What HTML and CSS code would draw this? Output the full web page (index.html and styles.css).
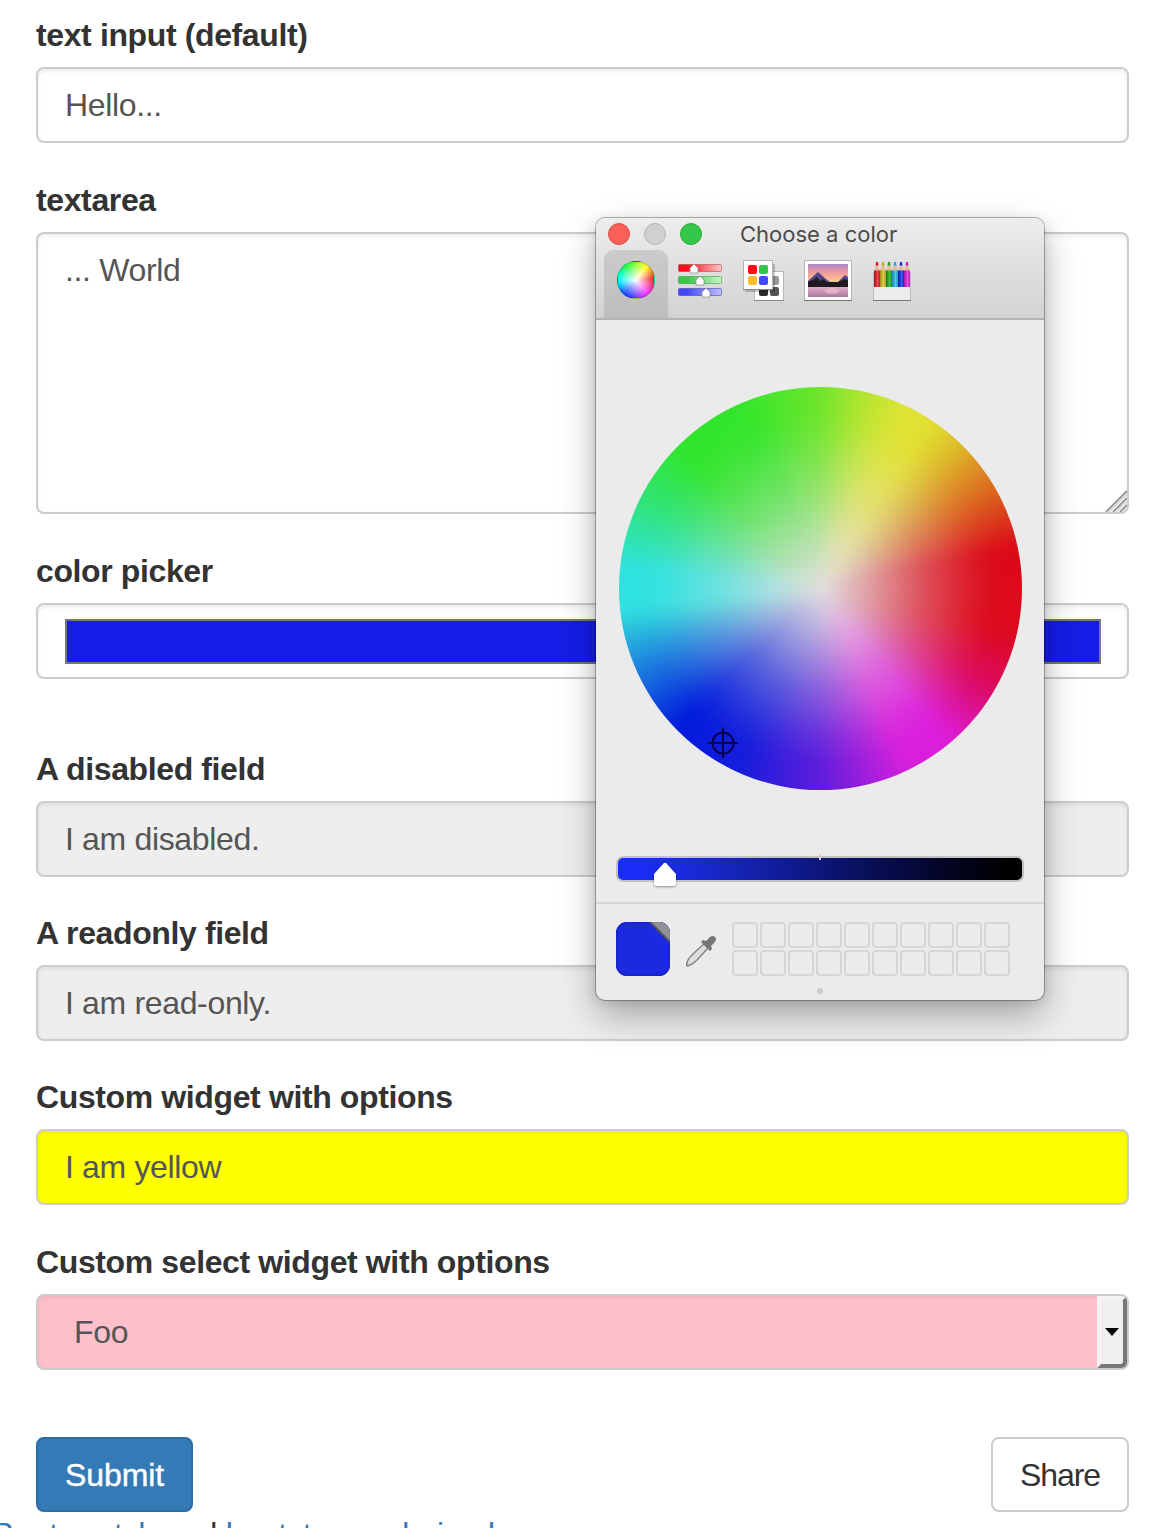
FILE: index.html
```
<!DOCTYPE html>
<html lang="en">
<head>
<meta charset="utf-8">
<title>Form widgets</title>
<link rel="stylesheet" href="styles.css">
</head>
<body>
<form class="form">
  <div class="group group-first"><div class="label">text input (default)</div><div class="control">Hello...</div></div>
  <div class="group"><div class="label">textarea</div>
    <div class="control control-area">... World
      <svg class="grip" width="22" height="22" viewBox="0 0 22 22"><path d="M1 22 22 1M8 22 22 8M15 22l7-7" stroke="#999" stroke-width="2"/><path d="M4 22 22 4M11 22l11-11M18 22l4-4" stroke="#ddd" stroke-width="2"/></svg>
    </div></div>
  <div class="group group-color"><div class="label">color picker</div><div class="control control-color"><div class="color-value"></div></div></div>
  <div class="group"><div class="label">A disabled field</div><div class="control control-off">I am disabled.</div></div>
  <div class="group"><div class="label">A readonly field</div><div class="control control-off">I am read-only.</div></div>
  <div class="group"><div class="label">Custom widget with options</div><div class="control control-yellow">I am yellow</div></div>
  <div class="group"><div class="label">Custom select widget with options</div>
    <div class="control control-pink"><span>Foo</span><span class="drop"><svg width="14" height="8" viewBox="0 0 14 8"><path d="M0 0h14L7 8z"/></svg></span></div></div>
  <div class="actions"><div class="btn btn-primary">Submit</div><div class="btn btn-share">Share</div></div>
</form>
<p class="footer"><a>Bootswatch</a> and <a>bootstrap a derived</a></p>

<section class="picker">
  <header class="picker-head">
    <div class="titlebar"><i class="dot red"></i><i class="dot gray"></i><i class="dot green"></i><span class="title">Choose a color</span></div>
    <nav class="tabs">
      <div class="tab tab-on"><div class="mini-wheel"></div></div>
      <div class="tab"><svg width="46" height="42" viewBox="0 0 46 42">
        <defs>
          <linearGradient id="r"><stop offset=".2" stop-color="#fc0d1b"/><stop offset="1" stop-color="#fcc8ca"/></linearGradient>
          <linearGradient id="g"><stop offset=".2" stop-color="#35c748"/><stop offset="1" stop-color="#c5f8c8"/></linearGradient>
          <linearGradient id="b"><stop offset=".2" stop-color="#424af8"/><stop offset="1" stop-color="#bcbffa"/></linearGradient>
        </defs>
        <rect x="1.5" y="4.5" width="43" height="7" rx="1" fill="url(#r)" stroke="#a33" stroke-opacity=".5"/>
        <rect x="1.5" y="16.5" width="43" height="7" rx="1" fill="url(#g)" stroke="#383" stroke-opacity=".5"/>
        <rect x="1.5" y="28.5" width="43" height="7" rx="1" fill="url(#b)" stroke="#33a" stroke-opacity=".5"/>
        <g fill="#fff" stroke="#777" stroke-width=".6"><path d="M13 13V8l4-4 4 4v5z"/><path d="M19 25v-5l4-4 4 4v5z"/><path d="M25 37v-5l4-4 4 4v5z"/></g>
      </svg></div>
      <div class="tab"><svg width="42" height="42" viewBox="0 0 42 42">
        <path d="M11.500 11.500h29v29h-29z" fill="#fff" stroke="#b5b5b5"/><path d="M11 40.500h30" stroke="#888"/>
        <rect x="27" y="16" width="9" height="9" rx="2" fill="#999b9f"/><rect x="16" y="27" width="9" height="9" rx="2" fill="#2c2c2c"/><rect x="27" y="27" width="9" height="9" rx="2" fill="#555659"/>
        <path d="M2 31h29V4" fill="none" stroke="#000" stroke-opacity=".2" stroke-width="2"/>
        <path d="M.5.5h29v29H.5z" fill="#fff" stroke="#b5b5b5"/><path d="M0 29.500h30" stroke="#888"/>
        <rect x="5" y="5" width="9" height="9" rx="2" fill="#fc0d1b"/><rect x="16" y="5" width="9" height="9" rx="2" fill="#35c748"/><rect x="5" y="16" width="9" height="9" rx="2" fill="#fdbd2d"/><rect x="16" y="16" width="9" height="9" rx="2" fill="#424af8"/>
      </svg></div>
      <div class="tab"><svg width="48" height="42" viewBox="0 0 48 42">
        <defs><linearGradient id="sky" x2="0" y2="1"><stop stop-color="#ae86c6"/><stop offset=".45" stop-color="#ef9d9c"/><stop offset="1" stop-color="#fcd68b"/></linearGradient><linearGradient id="sea" x2="0" y2="1"><stop stop-color="#e7b0cd"/><stop offset="1" stop-color="#aa7b9d"/></linearGradient></defs>
        <path d="M.5.5h47v40H.5z" fill="#fff" stroke="#b5b5b5"/><path d="M0 40.500h48" stroke="#777"/>
        <path d="M4 4h40v20H4z" fill="url(#sky)"/><path d="M4 26h40v11H4z" fill="url(#sea)"/>
        <path d="M4 21l10-9 8 7 4 3h8l7-7 3 2v8H4z" fill="#524587"/><path d="M4 22l5-2 4-3 3 4 3-2 4 3h11l6-3 4 1v7H4z" fill="#1d1b20"/><ellipse cx="28" cy="31" rx="7" ry="3" fill="#edc5d2" opacity=".6"/>
      </svg></div>
      <div class="tab"><svg width="38" height="42" viewBox="0 0 38 42">
        <defs>
          <linearGradient id="shade"><stop stop-opacity=".3"/><stop offset=".35" stop-opacity=".1"/><stop offset=".5" stop-color="#fff" stop-opacity=".2"/><stop offset="1" stop-opacity=".25"/></linearGradient>
          <g id="pencil"><path d="M0 11 2 4h2l2 7z" fill="#e0c09c"/><path d="M0 10.500h6V27H0z" fill="currentColor"/><path d="M1.500 5.500 2 2.500q1-1.500 2 0l.5 3z" fill="currentColor"/><path d="M1.500 5.500 2 2.500q1-1.500 2 0l.5 3z" opacity=".15"/><path d="M0 10.500h6V27H0z" fill="url(#shade)"/></g>
        </defs>
        <path d="M.5 12v28.500h37V12" fill="#ececec" stroke="#bbb"/><path d="M0 40.500h38" stroke="#777"/>
        <use href="#pencil" x="1" color="#ee252e"/><use href="#pencil" x="7" color="#dfc82b"/><use href="#pencil" x="13" color="#20b92d"/><use href="#pencil" x="19" color="#2fbdf9"/><use href="#pencil" x="25" color="#183af2"/><use href="#pencil" x="31" color="#e529e7"/>
      </svg></div>
    </nav>
  </header>
  <div class="wheel-area">
    <div class="wheel"><svg class="cross" width="30" height="30" viewBox="0 0 30 30"><path d="M15 0v30M0 15h30" /><circle cx="15" cy="15" r="10.500"/></svg></div>
    <div class="slider"><i class="tick"></i><svg class="thumb" width="24" height="26" viewBox="0 0 24 26"><path d="M1 12 10.500 1.500q1.500-1.500 3 0L23 12v9q0 3-3 3H4q-3 0-3-3z" fill="#fff"/></svg></div>
  </div>
  <footer class="picker-foot">
    <div class="foot-row">
      <div class="swatch"><svg width="54" height="54" viewBox="0 0 54 54"><path d="M34 0h20v20z" fill="#929292"/><path d="M34 0 54 20" stroke="#555" stroke-width="2"/></svg></div>
      <svg class="dropper" width="32" height="32" viewBox="0 0 32 32"><path d="M19 9 23 13 12 25Q7 30 2 31q-1-2 1-6Q5 21 19 9z" fill="#dedede" stroke="#858585" stroke-width="1.500"/><path d="M16 7l2-2 3 1 4-4q3-2 5 0 2 2 0 5l-4 4 1 3-2 2z" fill="#777"/></svg>
      <div class="cells"><i></i><i></i><i></i><i></i><i></i><i></i><i></i><i></i><i></i><i></i><i></i><i></i><i></i><i></i><i></i><i></i><i></i><i></i><i></i><i></i></div>
    </div>
    <div class="page-dot"></div>
  </footer>
</section>
</body>
</html>
```
FILE: styles.css
```
* { box-sizing: border-box; }
body { margin: 0; height: 1528px; overflow: hidden; position: relative; background: #fff; color: #333; font: 32px/45px "Liberation Sans", Arial, sans-serif; letter-spacing: -.34px; }
.form { padding: 11px 29px 0 36px; }
.group { margin-bottom: 32.400px; }
.group-first { margin-bottom: 33.300px; }
.group-color { margin-bottom: 66px; }
.label { height: 45px; margin-bottom: 11px; padding-top: 2px; font-weight: 700; letter-spacing: -.38px; white-space: nowrap; }
.control { height: 76px; padding: 14px 27px 0; border: 2px solid #ccc; border-radius: 8px; color: #555; background: #fff; box-shadow: inset 0 2px 4px rgba(0,0,0,.08); }
.control-area { height: 282px; position: relative; }
.grip { position: absolute; right: 0; bottom: 0; border-radius: 0 0 6px 0; }
.control-color { padding: 14px 26px 0 27px; }
.color-value { height: 45px; background: #161de6; border: 2px solid #777; }
.control-off { background: #eee; }
.control-yellow { background: #ff0; }
.control-pink { background: #ffc0cb; display: flex; justify-content: space-between; padding: 0 0 0 36px; }
.control-pink > span:first-child { padding-top: 14.500px; }
.drop { width: 30px; display: flex; align-items: center; justify-content: center; background: #efefef; border: 4px solid; border-color: #f4f4f4 #777 #777 #f4f4f4; border-radius: 0 6px 6px 0; }
.actions { display: flex; justify-content: space-between; padding-top: 35px; }
.btn { height: 75px; padding: 13.500px 27px; border: 2px solid #ccc; border-radius: 8px; }
.btn-primary { color: #fff; background: #337ab7; border-color: #2e6da4; letter-spacing: -.1px; -webkit-text-stroke: .4px #fff; }
.btn-share { letter-spacing: -1.100px; }
.footer { margin: 0 0 0 -7px; white-space: nowrap; letter-spacing: -.26px; }
.footer a { color: #337ab7; }

.picker { position: absolute; left: 596px; top: 218px; width: 448px; height: 782px; border-radius: 9px; background: #ebebeb; letter-spacing: 0; box-shadow: 0 0 0 1px rgba(0,0,0,.28), 0 16px 36px rgba(0,0,0,.3), 0 2px 12px rgba(0,0,0,.12); }
.picker-head { height: 102px; border-bottom: 2px solid #b5b5b5; border-radius: 9px 9px 0 0; background: linear-gradient(#ededed, #d2d2d2); }
.titlebar { height: 32px; padding-left: 12px; display: flex; align-items: center; gap: 14px; }
.dot { width: 22px; height: 22px; border: 1px solid #e04845; border-radius: 50%; background: #fc605b; }
.gray { background: #d0d0d0; border-color: #b5b5b5; }
.green { background: #34c84a; border-color: #24a936; }
.title { margin-left: 24px; color: #4b4b4b; font: 22px/32px Inter, "Noto Sans", sans-serif; }
.tabs { display: flex; padding-left: 8px; }
.tab { width: 64px; height: 68px; padding-top: 10px; display: flex; justify-content: center; align-items: flex-start; }
.tab-on { background: linear-gradient(#ccc, #bdbdbd); border-radius: 9px 9px 0 0; }
.mini-wheel { width: 38px; height: 38px; margin-top: 1px; border-radius: 50%; border: 1px solid rgba(0,0,0,.2); background: radial-gradient(circle closest-side, #fff, transparent), conic-gradient(#8f2 0deg, #ff2 38deg, #fc2020 85deg, #f3f 140deg, #43f 190deg, #14f 220deg, #0ff 270deg, #1f4 325deg, #8f2 360deg); }
.wheel-area { height: 583px; padding: 66.500px 20px 0; }
.wheel { position: relative; width: 403px; height: 403px; margin-left: 2.500px; border-radius: 50%; overflow: hidden; }
.wheel::before { content: ""; position: absolute; inset: -40px; filter: blur(7px); background: radial-gradient(circle 201px, #e3e0e0 0, rgba(227,224,224,.72) 22%, rgba(227,224,224,.34) 50%, rgba(227,224,224,.08) 75%, rgba(227,224,224,0) 88%), conic-gradient(#70e52c 0deg, #b4e530 13deg, #dfe434 25deg, #e2e030 34deg, #ddba2a 44deg, #dc6e1f 59deg, #dc0a18 78deg, #dc0a1c 103deg, #dc0a60 120deg, #dc1edc 140deg, #d820dc 154deg, #601cdc 180deg, #161ddc 204deg, #001bdc 226deg, #1f88df 248deg, #30e2df 264deg, #30e2df 276deg, #30e475 297deg, #30e52c 315deg, #35e62b 338deg, #70e52c 360deg); }
.cross { position: absolute; left: 89.500px; top: 341px; fill: none; stroke: #080052; stroke-width: 2; }
.slider { position: relative; height: 26px; width: 408px; margin-top: 66.500px; border: 2px solid #c2c2c2; border-radius: 7px; background: linear-gradient(90deg, #1a2dff, #192bd8 18%, #0b126d 55%, #03041f 83%, #000 96%); }
.tick { position: absolute; left: 201px; top: -4px; width: 2px; height: 6px; background: #d0d0d0; }
.thumb { position: absolute; left: 35px; top: 4px; filter: drop-shadow(0 1px 1px rgba(0,0,0,.4)); }
.picker-foot { height: 97px; padding: 18px 20px 0; border-top: 2px solid #d4d4d4; margin-top: -1px; }
.foot-row { display: flex; }
.swatch { width: 54px; height: 54px; overflow: hidden; border-radius: 11px; background: #1b2ade; box-shadow: inset 0 0 2px 1px #1520bd; }
.dropper { margin: 13px 0 0 15px; }
.cells { display: grid; grid-template-columns: repeat(10, 26px); gap: 2px; margin-left: 15px; }
.cells i { height: 26px; border: 2px solid #d5d5d5; border-radius: 4px; }
.page-dot { width: 6px; height: 6px; margin: 12px auto 0; border-radius: 50%; background: #ccc; }
```
